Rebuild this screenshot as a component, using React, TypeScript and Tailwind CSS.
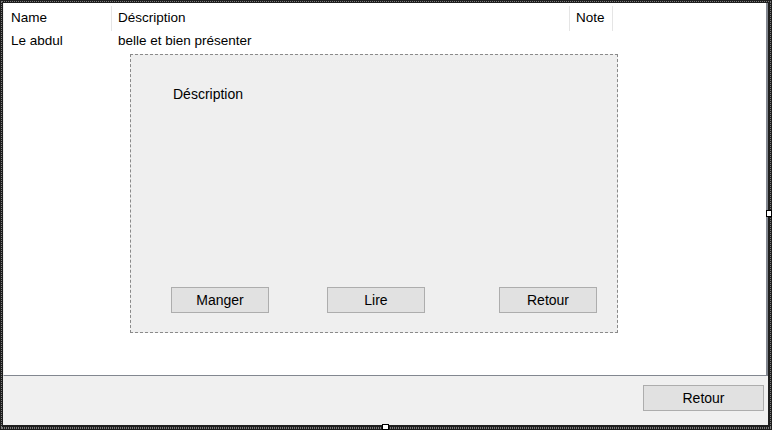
import React from "react";

const font = { fontFamily: '"Liberation Sans", Arial, sans-serif' };

function Btn({ label, className }: { label: string; className: string }) {
  return (
    <div
      className={`flex items-center justify-center bg-[#e1e1e1] border border-[#adadad] text-[14px] text-black ${className}`}
    >
      {label}
    </div>
  );
}

export default function App() {
  return (
    <div
      className="relative w-[772px] h-[430px] bg-[#1e1e1e] pt-[3px] pl-[3px] pr-[4px] pb-[5px] flex flex-col"
      style={font}
    >
      <div className="absolute inset-[1px] border border-dotted border-[#7a7a7a] pointer-events-none" />
      <div className="absolute left-[1px] right-[1px] bottom-[2px] border-b border-dotted border-[#7a7a7a] pointer-events-none" />

      <div className="relative flex-1 flex flex-col">
        {/* ListView */}
        <div className="relative flex-1 bg-white border-l border-l-[#f0f0f0] border-r-[2px] border-r-[#828790] border-b border-b-[#828790]">
          <div className="flex h-[29px] text-[13.5px] text-black">
            <div className="w-[107px] pl-[7px] flex items-center pt-[2px]">Name</div>
            <div className="w-px bg-[#e5e5e5] mt-[3px] mb-[1px]" />
            <div className="w-[457px] pl-[6px] flex items-center pt-[2px]">Déscription</div>
            <div className="w-px bg-[#e5e5e5] mt-[3px] mb-[1px]" />
            <div className="w-[42px] pl-[6px] flex items-center pt-[2px]">Note</div>
            <div className="w-px bg-[#e5e5e5] mt-[3px] mb-[1px]" />
          </div>
          <div className="flex h-[18px] items-center text-[13.5px] text-black">
            <div className="w-[108px] pl-[7px]">Le abdul</div>
            <div className="pl-[6px]">belle et bien présenter</div>
          </div>

          {/* Dashed panel overlay */}
          <div className="absolute left-[126px] top-[51px] w-[488px] h-[279px] bg-[#efefef] border border-dashed border-[#8a8a8a] flex flex-col">
            <div className="pt-[31px] pl-[42px] text-[14px] text-black leading-[16px]">
              Déscription
            </div>
            <div className="mt-auto mb-[19px] flex pl-[40px]">
              <Btn label="Manger" className="w-[98px] h-[26px]" />
              <Btn label="Lire" className="w-[98px] h-[26px] ml-[58px]" />
              <Btn label="Retour" className="w-[98px] h-[26px] ml-[74px]" />
            </div>
          </div>
        </div>

        {/* Bottom panel */}
        <div className="h-[49px] bg-[#f0f0f0] flex justify-end items-start pt-[9px] pr-[4px]">
          <Btn label="Retour" className="w-[121px] h-[26px]" />
        </div>
      </div>

      {/* resize handles */}
      <div className="absolute right-0 top-[210px] w-[6px] h-[7px] bg-white border border-black" />
      <div className="absolute bottom-0 left-[382px] w-[7px] h-[6px] bg-white border border-black" />
    </div>
  );
}
